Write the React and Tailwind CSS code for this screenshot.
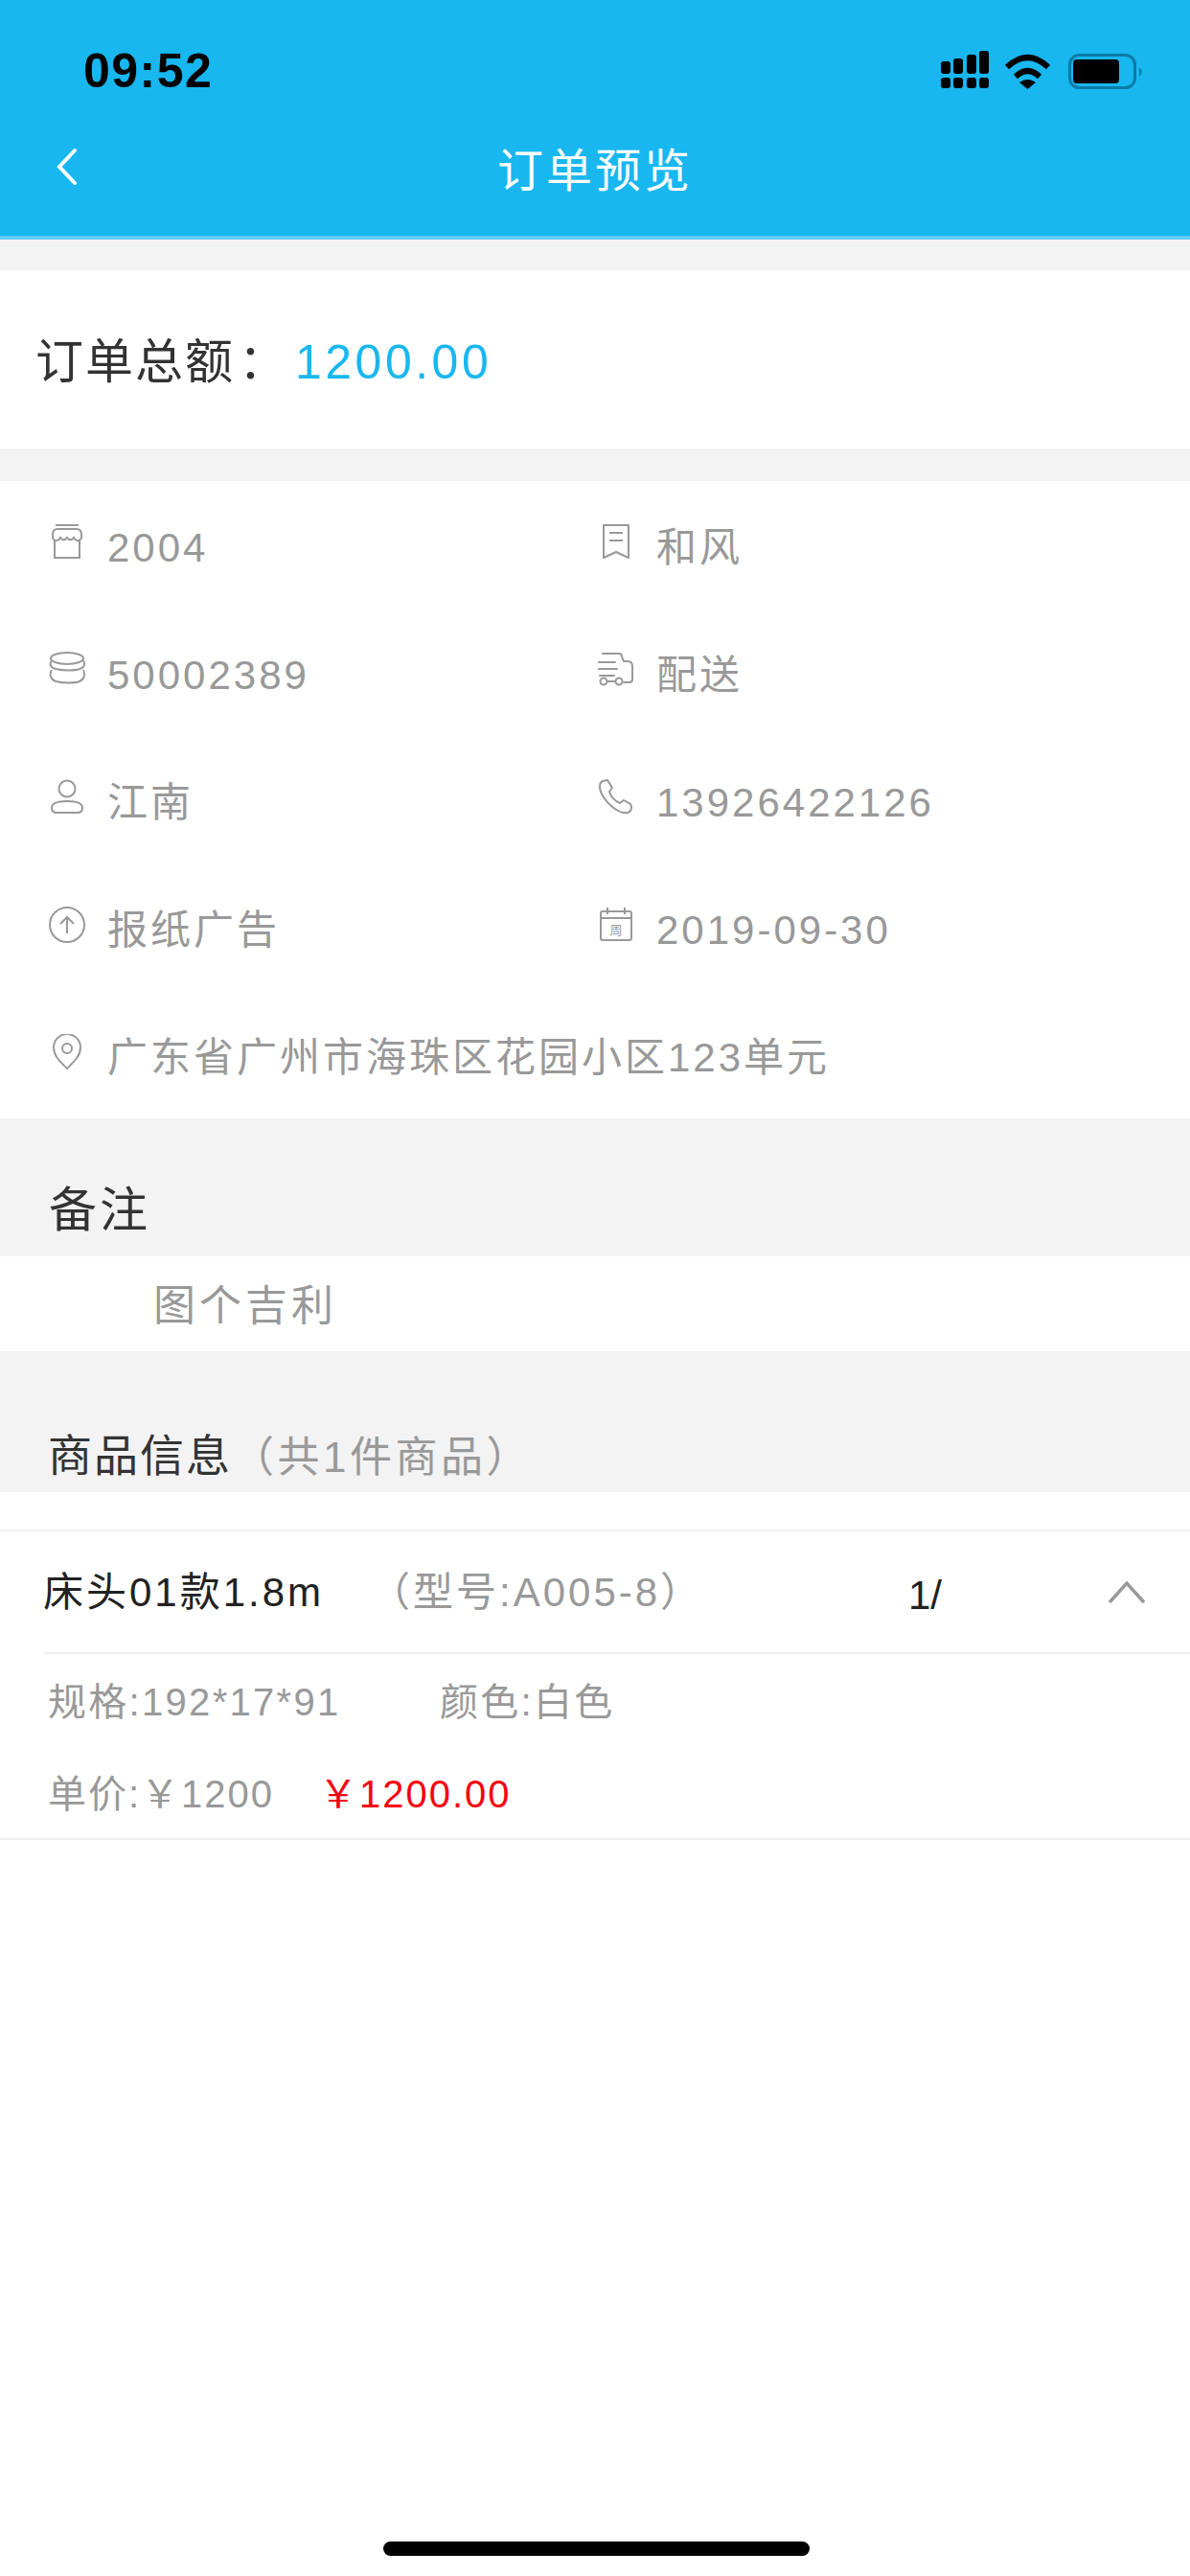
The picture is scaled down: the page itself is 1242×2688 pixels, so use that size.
import React from "react";

const font = { fontFamily: '"Liberation Sans", "Noto Sans CJK SC", sans-serif' };

const StoreIcon = () => (
  <svg width="38" height="40" viewBox="0 0 38 40" fill="none" stroke="#999" strokeWidth="2">
    <path d="M7 2h24" />
    <path d="M4 16v-4q0-6 5-6h20q5 0 5 6v4" />
    <path d="M4 16c3 3 6 3 8-1 2 3 5 3 7 0 2 3 5 3 7 0 2 4 5 4 8 1" />
    <path d="M6 17v19h26V17" />
  </svg>
);

const BookmarkIcon = () => (
  <svg width="38" height="40" viewBox="0 0 38 40" fill="none" stroke="#999" strokeWidth="2" strokeLinejoin="round">
    <path d="M6 2h26v34l-13-6-13 6z" />
    <path d="M12 10h14M12 18h14" />
  </svg>
);

const CoinsIcon = () => (
  <svg width="38" height="38" viewBox="0 0 38 38" fill="none" stroke="#999" strokeWidth="2">
    <ellipse cx="19" cy="7" rx="17" ry="6" />
    <path d="M3 9c-3 4-1 8 4 9 8 2 20 2 25 0 5-1 6-5 4-9" />
    <path d="M3 19c-3 5-1 10 4 12 8 2 20 2 25 0 5-2 6-7 4-12" />
  </svg>
);

const TruckIcon = () => (
  <svg width="38" height="38" viewBox="0 0 38 38" fill="none" stroke="#999" strokeWidth="2" strokeLinecap="round">
    <path d="M5 2h17q3 0 3 3l2 5h4q5 0 5 5v14q0 3-3 3h-6" />
    <path d="M1 11h17M1 18h19M2 25h15" />
    <circle cx="6" cy="31" r="3.500" />
    <circle cx="22" cy="31" r="3.500" />
    <path d="M10 31h8" />
  </svg>
);

const UserIcon = () => (
  <svg width="38" height="38" viewBox="0 0 38 38" fill="none" stroke="#999" strokeWidth="2">
    <circle cx="19" cy="10" r="8.500" />
    <path d="M3 30c0-5 7-7 16-7s16 2 16 7c0 3-2 5-5 5H8c-3 0-5-2-5-5z" />
  </svg>
);

const PhoneIcon = () => (
  <svg width="38" height="38" viewBox="0 0 38 38" fill="none" stroke="#999" strokeWidth="2" strokeLinejoin="round">
    <path d="M5 2l5-1 5 8-3 4c1 5 6 10 11 12l4-3 7 4c2 3 1 8-3 9-4 1-10-1-17-7C7 22 2 14 2 8c0-3 1-5 3-6z" />
  </svg>
);

const UploadIcon = () => (
  <svg width="38" height="38" viewBox="0 0 38 38" fill="none" stroke="#999" strokeWidth="2">
    <circle cx="19" cy="19" r="18" />
    <path d="M19 28V11M12 18l7-7 7 7" />
  </svg>
);

const CalendarIcon = () => (
  <svg width="38" height="38" viewBox="0 0 38 38" fill="none" stroke="#999" strokeWidth="2">
    <rect x="3" y="5" width="32" height="30" rx="2" />
    <path d="M3 12h32M10 1v7M28 1v7" />
    <text x="19" y="29" fontSize="13" textAnchor="middle" fill="#999" stroke="none">周</text>
  </svg>
);

const PinIcon = () => (
  <svg width="38" height="38" viewBox="0 0 38 38" fill="none" stroke="#999" strokeWidth="2">
    <path d="M19 36C12 29 5 23 5 14a14 14 0 0 1 28 0c0 9-7 15-14 22z" />
    <circle cx="19" cy="15" r="5" />
  </svg>
);

const StatusIcons = () => (
  <svg width="216" height="46" viewBox="0 0 216 46">
    {/* signal */}
    <g fill="#000">
      <rect x="2" y="14" width="10" height="13" rx="3" />
      <rect x="15" y="11" width="10" height="16" rx="3" />
      <rect x="29" y="7" width="10" height="20" rx="3" />
      <rect x="42" y="3" width="10" height="24" rx="3" />
      <rect x="2" y="31" width="10" height="11" rx="3" />
      <rect x="15" y="31" width="10" height="11" rx="3" />
      <rect x="29" y="31" width="10" height="11" rx="3" />
      <rect x="42" y="31" width="10" height="11" rx="3" />
    </g>
    {/* wifi */}
    <g fill="none" stroke="#000" strokeWidth="6">
      <path d="M71 20Q92.500 0 114 20" />
      <path d="M80 30Q92.500 18 105 30" />
    </g>
    <path d="M84 36Q92.500 30 101 36L92.500 43z" fill="#000" />
    {/* battery */}
    <rect x="136.500" y="7.500" width="68" height="34" rx="10" fill="none" stroke="#0b7ba6" strokeWidth="3" />
    <rect x="140" y="12" width="48" height="25" rx="4" fill="#000" />
    <path d="M209 20q5 5 0 10z" fill="#0b7ba6" />
  </svg>
);

function InfoItem({ icon, text, span }) {
  return (
    <div className={`flex items-center gap-[23px] h-[133px] ${span ? "col-span-2" : ""}`}>
      <div className="w-[38px] mb-[6px] flex justify-center">{icon}</div>
      <span className="text-[42px] tracking-[3px] text-[#999] pt-[5px]">{text}</span>
    </div>
  );
}

export default function App() {
  return (
    <div className="w-[1242px] h-[2688px] bg-white flex flex-col relative overflow-hidden" style={font}>
      {/* Header */}
      <div className="h-[250px] shrink-0 bg-[#18b7f0] border-b-4 border-[#5fcdf6] flex flex-col">
        <div className="flex items-center justify-between h-[126px] pt-[20px] pl-[87px] pr-[46px]">
          <span className="text-[50px] font-bold tracking-[1.500px] text-black pt-[3px]">09:52</span>
          <StatusIcons />
        </div>
        <div className="flex items-center h-[100px] relative justify-center pt-[6px]">
          <svg className="absolute left-[56px] top-[28px]" width="26" height="40" viewBox="0 0 26 40" fill="none" stroke="#fff" strokeWidth="4" strokeLinecap="round">
            <path d="M22 3L6 20l16 17" />
          </svg>
          <span className="text-[48px] tracking-[3px] text-white">订单预览</span>
        </div>
      </div>

      <div className="h-[32px] shrink-0 bg-[#f3f3f3]" />

      {/* Total */}
      <div className="h-[186px] shrink-0 flex items-center pl-[37px] pt-[6px]">
        <span className="text-[50px] tracking-[2px] text-[#333] w-[271px] whitespace-nowrap">
          订单总额<span className="ml-[4px]">：</span>
        </span>
        <span className="text-[50px] tracking-[3.500px] text-[#18b7f0]">1200.00</span>
      </div>

      <div className="h-[34px] shrink-0 bg-[#f3f3f3]" />

      {/* Info */}
      <div className="grid grid-cols-[573px_1fr] pl-[51px] h-[665px] shrink-0">
        <InfoItem icon={<StoreIcon />} text="2004" />
        <InfoItem icon={<BookmarkIcon />} text="和风" />
        <InfoItem icon={<CoinsIcon />} text="50002389" />
        <InfoItem icon={<TruckIcon />} text="配送" />
        <InfoItem icon={<UserIcon />} text="江南" />
        <InfoItem icon={<PhoneIcon />} text="13926422126" />
        <InfoItem icon={<UploadIcon />} text="报纸广告" />
        <InfoItem icon={<CalendarIcon />} text="2019-09-30" />
        <InfoItem icon={<PinIcon />} text="广东省广州市海珠区花园小区123单元" span />
      </div>

      {/* Remarks */}
      <div className="h-[144px] shrink-0 bg-[#f3f3f3] flex items-end pl-[51px] pb-[10px]">
        <span className="text-[50px] tracking-[3px] text-[#333]">备注</span>
      </div>
      <div className="h-[99px] shrink-0 flex items-center pl-[160px] pt-[5px]">
        <span className="text-[44px] tracking-[4px] text-[#999]">图个吉利</span>
      </div>

      {/* Goods header */}
      <div className="h-[147px] shrink-0 bg-[#f3f3f3] flex items-end pl-[50px] pb-[3px]">
        <span className="text-[46px] tracking-[2px] text-[#333]">商品信息</span>
        <span className="text-[44px] tracking-[3.500px] text-[#999]">（共1件商品）</span>
      </div>

      {/* Goods */}
      <div className="mt-[39px] border-t-2 border-b-2 border-[#f0f0f0] h-[324px] shrink-0 flex flex-col">
        <div className="ml-[45px] h-[128px] shrink-0 border-b-2 border-[#f0f0f0] flex items-center relative">
          <span className="text-[42px] tracking-[3px] text-[#222] w-[338px]">床头01款1.8m</span>
          <span className="text-[42px] tracking-[3px] text-[#999] w-[565px] pl-[3px]">（型号:A005-8）</span>
          <span className="text-[42px] text-[#222] pt-[6px]">1/</span>
          <svg className="absolute right-[46px] top-[50px]" width="40" height="26" viewBox="0 0 40 26" fill="none" stroke="#999" strokeWidth="3.500">
            <path d="M2 24L20 4l18 20" />
          </svg>
        </div>
        <div className="flex items-center h-[100px] pl-[50px] text-[40px] tracking-[2.300px] text-[#999]">
          <span className="w-[409px]">规格:192*17*91</span>
          <span>颜色:白色</span>
        </div>
        <div className="flex items-center h-[92px] pl-[50px] text-[40px] tracking-[2px]">
          <span className="w-[283px] text-[#999]">单价:￥1200</span>
          <span className="text-[#f5000f]">￥1200.00</span>
        </div>
      </div>

      {/* Home indicator */}
      <div className="absolute left-[400px] bottom-[21px] w-[445px] h-[15px] rounded-full bg-black" />
    </div>
  );
}
